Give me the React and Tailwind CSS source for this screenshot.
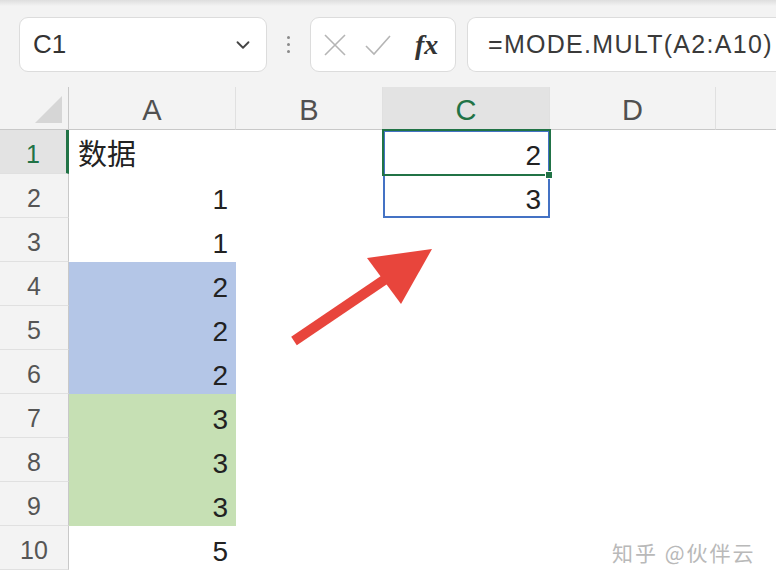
import React from 'react'
import { ChevronDown } from 'lucide-react'

const cols = ['A', 'B', 'C', 'D', '']
const rows = [
  { a: '数据', fill: '' },
  { a: '1', fill: '' },
  { a: '1', fill: '' },
  { a: '2', fill: 'bg-[#b4c6e7]' },
  { a: '2', fill: 'bg-[#b4c6e7]' },
  { a: '2', fill: 'bg-[#b4c6e7]' },
  { a: '3', fill: 'bg-[#c6e0b4]' },
  { a: '3', fill: 'bg-[#c6e0b4]' },
  { a: '3', fill: 'bg-[#c6e0b4]' },
  { a: '5', fill: '' },
]
const cValues = ['2', '3']

const font = { fontFamily: '"Liberation Sans", "Noto Sans CJK SC", sans-serif' }

function FormulaBar() {
  return (
    <div className="h-[87px] bg-[#f3f3f3] relative">
      <div className="h-[6px] bg-gradient-to-b from-[#dedede] to-[#f3f3f3]" />
      <div className="flex items-center pt-[11px] pl-[19px] gap-0">
        <div className="w-[248px] h-[55px] bg-white border border-[#dcdcdc] rounded-[9px] flex items-center pl-[13px] pr-[12px]">
          <span className="text-[26px] text-[#333] flex-1">C1</span>
          <ChevronDown size={22} strokeWidth={2} className="text-[#444]" />
        </div>
        <div className="w-[43px] flex flex-col items-center gap-[4px]">
          <span className="w-[3px] h-[3px] rounded-full bg-[#8a8a8a]" />
          <span className="w-[3px] h-[3px] rounded-full bg-[#8a8a8a]" />
          <span className="w-[3px] h-[3px] rounded-full bg-[#8a8a8a]" />
        </div>
        <div className="w-[146px] h-[55px] bg-white border border-[#dcdcdc] rounded-[9px] flex items-center pl-[12px] gap-[18px]">
          <svg width="24" height="24" viewBox="0 0 24 24" className="text-[#b5b5b5]">
            <path d="M2 2 L22 22 M22 2 L2 22" stroke="currentColor" strokeWidth="1.6" fill="none" />
          </svg>
          <svg width="26" height="22" viewBox="0 0 26 22" className="text-[#b5b5b5]">
            <path d="M1 12 L9 20 L25 2" stroke="currentColor" strokeWidth="1.6" fill="none" />
          </svg>
          <span className="text-[28px] text-[#333] italic font-bold ml-[6px]" style={{ fontFamily: '"Liberation Serif", serif' }}>fx</span>
        </div>
        <div className="ml-[11px] flex-1 h-[55px] bg-white border border-[#dcdcdc] rounded-l-[9px] border-r-0 flex items-center pl-[20px] overflow-hidden whitespace-nowrap">
          <span className="text-[25px] text-[#3a3a3a] tracking-[1.3px]">=MODE.MULT(A2:A10)</span>
        </div>
      </div>
    </div>
  )
}

export default function App() {
  return (
    <div className="w-[776px] h-[583px] bg-white overflow-hidden relative" style={font}>
      <FormulaBar />
      <div className="relative">
        <div className="grid grid-cols-[69px_167px_147px_167px_166px_1fr]">
          {/* header row */}
          <div className="h-[43px] bg-[#f3f3f3] border-b border-r border-[#c8c8c8] relative">
            <svg width="69" height="42" className="absolute left-0 top-0">
              <polygon points="35,36 62,36 62,9" fill="#d6d6d6" />
            </svg>
          </div>
          {cols.map((c, i) => (
            <div
              key={i}
              className={`h-[43px] border-b border-[#c8c8c8] flex items-center justify-center pt-[6px] text-[29px] ${i < 4 ? 'border-r border-r-[#e0e0e0]' : ''} ${c === 'C' ? 'bg-[#e3e3e3] text-[#217346]' : 'bg-[#f3f3f3] text-[#505050]'}`}
            >
              {c}
            </div>
          ))}

          {rows.map((r, i) => (
            <React.Fragment key={i}>
              <div
                className={`h-[44px] flex items-center justify-center pt-[6px] text-[25px] border-b border-[#e0e0e0] ${i === 0 ? 'bg-[#e3e3e3] text-[#217346] border-r-[3px] border-r-[#217346]' : 'bg-[#f3f3f3] text-[#555] border-r border-r-[#c8c8c8]'}`}
              >
                {i + 1}
              </div>
              <div
                className={`h-[44px] flex items-center pt-[7px] text-[28px] text-[#222] ${r.fill} ${i === 0 ? 'justify-start pl-[9px] text-[29px]' : 'justify-end pr-[8px]'}`}
              >
                {r.a}
              </div>
              <div className="h-[44px]" />
              <div className="h-[44px] flex items-center justify-end pt-[7px] pr-[9px] text-[28px] text-[#222]">
                {cValues[i] || ''}
              </div>
              <div className="h-[44px]" />
              <div className="h-[44px]" />
            </React.Fragment>
          ))}
        </div>

        {/* spill range + active cell */}
        <div className="absolute left-[383px] top-[43px] w-[167px] h-[88px] border-2 border-solid border-[#4472c4] pointer-events-none" />
        <div className="absolute left-[382px] top-[42px] w-[169px] h-[47px] border-2 border-[#217346] pointer-events-none" />
        <div className="absolute left-[545px] top-[84px] w-[8px] h-[8px] bg-[#217346] border border-white pointer-events-none" />

        {/* red arrow */}
        <svg width="776" height="440" className="absolute left-0 top-0 pointer-events-none">
          <line x1="294" y1="254" x2="390" y2="189" stroke="#e8453c" strokeWidth="10" />
          <polygon points="432,162 367,171 401,217" fill="#e8453c" />
        </svg>

        <div className="absolute left-[612px] top-[450px] text-[21px] text-[#b9b9b9] tracking-[2px]" style={{ fontFamily: '"Noto Sans CJK SC", sans-serif', textShadow: '0 0 2px #fff' }}>
          知乎 @伙伴云
        </div>
      </div>
    </div>
  )
}
